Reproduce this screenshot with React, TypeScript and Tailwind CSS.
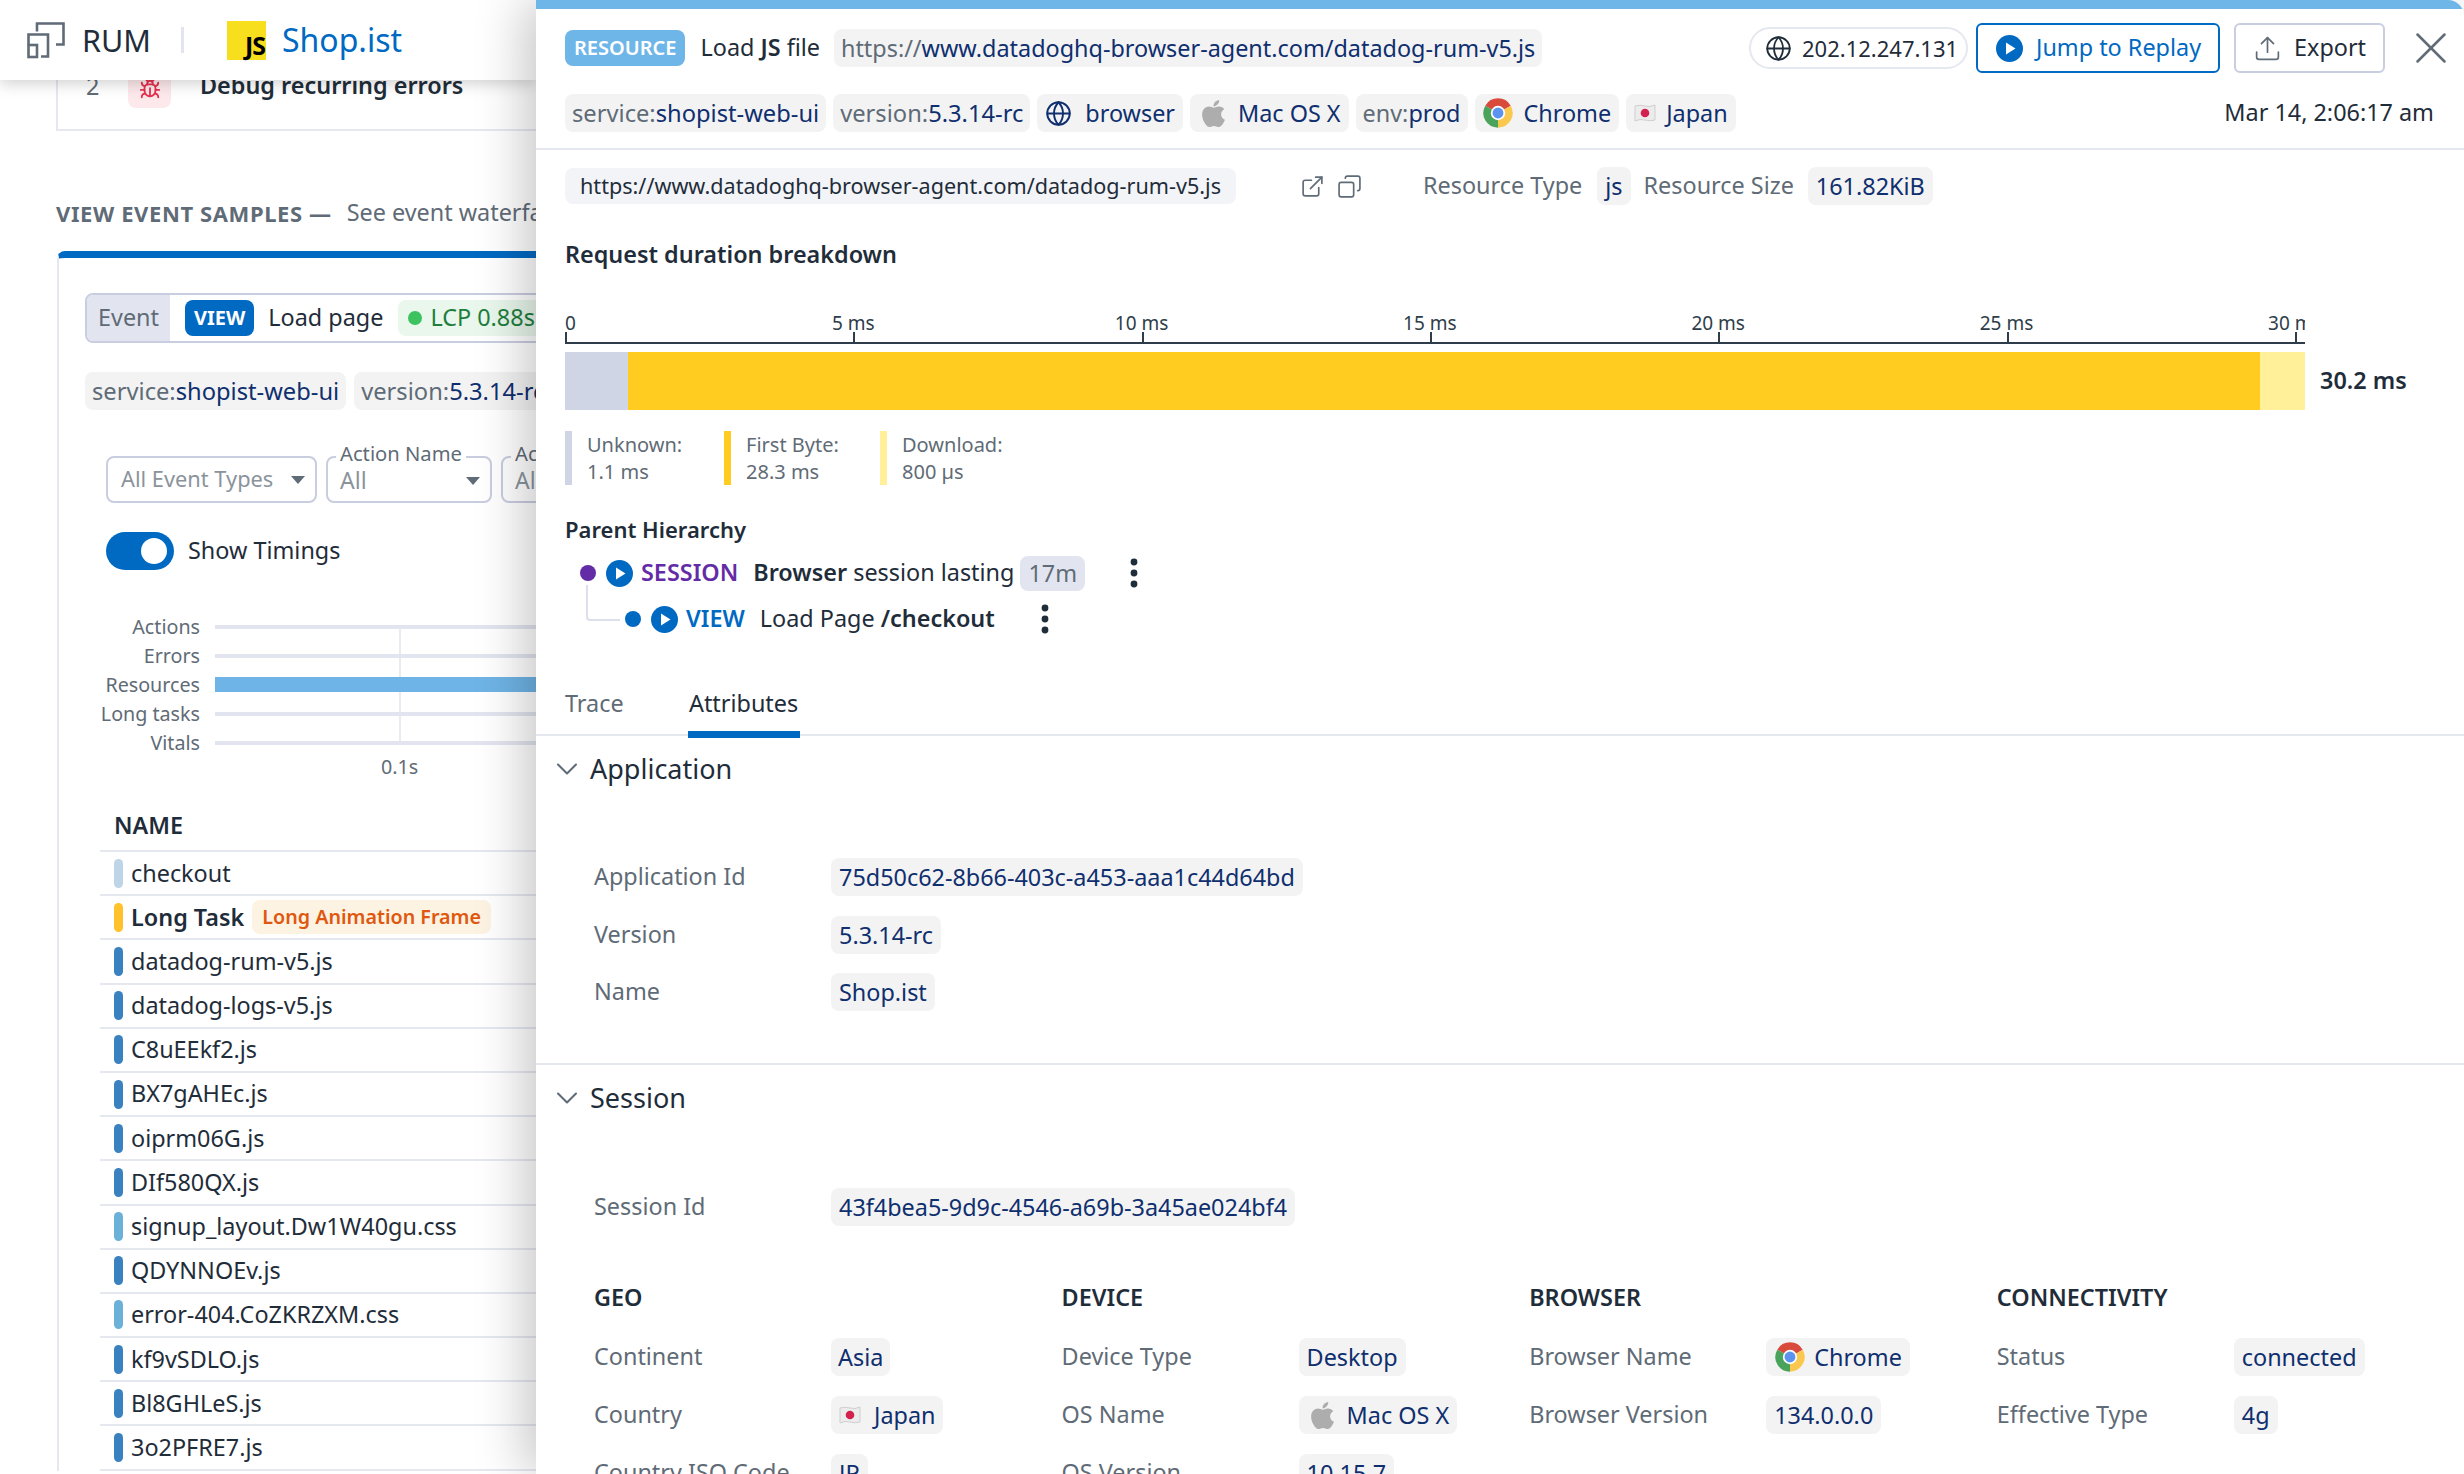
import React from "react";
import { Bug, ChevronDown, Copy, ExternalLink, Globe, Upload, X } from "lucide-react";
import { FaApple } from "react-icons/fa";

const Tag = ({ children, className = "" }: { children: React.ReactNode; className?: string }) => (
  <span className={`inline-flex h-[38px] shrink-0 items-center whitespace-nowrap rounded-lg bg-[#f3f3f4] px-[8px] text-[23.4px] leading-[38px] text-[#0f2f6e] ${className}`}>
    {children}
  </span>
);
const Key = ({ children }: { children: React.ReactNode }) => <span className="text-[#5f6b76]">{children}</span>;

const Chrome = ({ size = 32 }: { size?: number }) => (
  <svg width={size} height={size} viewBox="0 0 24 24" className="shrink-0">
    <path d="M12 12L2.47 6.5A11 11 0 0 1 21.53 6.5Z" fill="#d9493c" />
    <path d="M12 12L21.53 6.5A11 11 0 0 1 12 23Z" fill="#fbc84f" />
    <path d="M12 12L12 23A11 11 0 0 1 2.47 6.5Z" fill="#4aa35a" />
    <circle cx="12" cy="12" r="5.4" fill="#fff" />
    <circle cx="12" cy="12" r="4.1" fill="#5b93ee" />
  </svg>
);
const Flag = () => (
  <svg width="22" height="22" viewBox="0 0 22 22" className="shrink-0">
    <path d="M1 4Q6 2.5 11 4T21 3V18Q16 19.5 11 18T1 19Z" fill="#ececec" stroke="#cfcfcf" />
    <circle cx="11" cy="11" r="4.3" fill="#d3214f" />
  </svg>
);
const Apple = () => <FaApple className="shrink-0 text-[31px] text-[#adadad]" />;
const Play = ({ className = "" }: { className?: string }) => (
  <svg width="27" height="27" viewBox="0 0 27 27" className={`shrink-0 ${className}`}>
    <circle cx="13.5" cy="13.5" r="13.5" fill="#0069c2" />
    <path d="M10 7.5L19.5 13.5L10 19.5Z" fill="#fff" />
  </svg>
);
const Kebab = ({ className = "" }: { className?: string }) => (
  <svg width="8" height="30" viewBox="0 0 8 30" className={`shrink-0 ${className}`}>
    <circle cx="4" cy="4" r="3.4" fill="#1f2d3a" />
    <circle cx="4" cy="15" r="3.4" fill="#1f2d3a" />
    <circle cx="4" cy="26" r="3.4" fill="#1f2d3a" />
  </svg>
);
const Caret = () => (
  <svg width="14" height="8" viewBox="0 0 16 9" className="shrink-0">
    <path d="M0 0H16L8 9Z" fill="#5f6b76" />
  </svg>
);
const RumIcon = () => (
  <svg width="38" height="37" viewBox="0 0 38 37" fill="none" stroke="#5f6b76" strokeWidth="2.6" className="shrink-0">
    <path d="M10 9.5V1.5H36.5V22.5H29" />
    <path d="M1.5 22.5V12.5H21V34.5H14" />
    <rect x="1.5" y="23" width="8.5" height="12" />
  </svg>
);

const resources: [string, string][] = [
  ["datadog-rum-v5.js", "bg-[#3a82bf]"],
  ["datadog-logs-v5.js", "bg-[#3a82bf]"],
  ["C8uEEkf2.js", "bg-[#3a82bf]"],
  ["BX7gAHEc.js", "bg-[#3a82bf]"],
  ["oiprm06G.js", "bg-[#3a82bf]"],
  ["DIf580QX.js", "bg-[#3a82bf]"],
  ["signup_layout.Dw1W40gu.css", "bg-[#6bb0d9]"],
  ["QDYNNOEv.js", "bg-[#3a82bf]"],
  ["error-404.CoZKRZXM.css", "bg-[#6bb0d9]"],
  ["kf9vSDLO.js", "bg-[#3a82bf]"],
  ["Bl8GHLeS.js", "bg-[#3a82bf]"],
  ["3o2PFRE7.js", "bg-[#3a82bf]"],
];

const TableRow = ({ bar, children }: { bar: string; children: React.ReactNode }) => (
  <div className="flex h-[44.2px] items-center gap-[8px] whitespace-nowrap border-b-2 border-[#e6e8f0] pl-[14px] text-[23.4px] text-[#1f2d3a]">
    <span className={`h-[29px] w-[9px] shrink-0 rounded-full ${bar}`} />
    {children}
  </div>
);

const Left = () => (
  <div className="relative w-[536px] shrink-0 overflow-hidden">
    <div className="relative z-10 flex h-[80px] items-center bg-white pl-[27px] shadow-[0_4px_14px_rgba(0,0,0,0.18)]">
      <RumIcon />
      <span className="ml-[17px] text-[30.5px] leading-[40px] text-[#1f2d3a]">RUM</span>
      <span className="ml-[30px] h-[26px] w-[3px] bg-[#e2e5ef]" />
      <span className="ml-[43px] flex h-[39px] w-[39px] items-end justify-end bg-[#f7df1e] pb-[1px] pr-[1px] text-[25px] font-bold leading-[28px] tracking-[-1px] text-black">JS</span>
      <span className="ml-[16px] text-[32px] leading-[44px] text-[#0069c2]">Shop.ist</span>
    </div>
    <div className="-mt-[20px] ml-[56px] h-[71px] w-[600px] border-b-2 border-l-2 border-[#e6e8f0] pt-[6px]">
      <div className="flex h-[42px] items-center whitespace-nowrap">
        <span className="ml-[28px] w-[42px] text-[23.4px] text-[#5f6b76]">2</span>
        <span className="flex h-[42px] w-[43px] items-end justify-center rounded-lg bg-[#fde9ec] pb-[8px]"><Bug size={22} className="text-[#e6304f]" /></span>
        <span className="ml-[29px] -translate-y-[1px] text-[23.4px] font-semibold text-[#1f2d3a]">Debug recurring errors</span>
      </div>
    </div>
    <div className="ml-[56px] mt-[66px] flex h-[32px] items-center whitespace-nowrap text-[#5f6b76]">
      <span className="text-[22px] font-bold tracking-[0.6px]">VIEW EVENT SAMPLES —</span>
      <span className="ml-[15px] text-[23.4px]">See event waterfall</span>
    </div>
    <div className="ml-[57px] mt-[22px] w-[800px] rounded-tl-lg border-l-2 border-t-[7px] border-[#e6e8f0] border-t-[#0069c2] pb-0 pl-[26px] pt-[35px]">
      <div className="flex h-[50px] items-center whitespace-nowrap rounded-lg border-2 border-[#c8cde0]">
        <span className="flex h-full w-[83px] items-center justify-center rounded-l-md bg-[#e2e5ef] text-[23.4px] text-[#5f6b76]">Event</span>
        <span className="ml-[15px] rounded-lg bg-[#0069c2] px-[9px] text-[20px] font-bold leading-[36px] text-white">VIEW</span>
        <span className="ml-[14px] text-[23.4px] text-[#1f2d3a]">Load page</span>
        <span className="ml-[15px] flex h-[36px] items-center gap-[8px] rounded-lg bg-[#e9f7ec] pl-[10px] pr-[10px] text-[23.4px] text-[#1e7e3e]">
          <span className="h-[14px] w-[14px] rounded-full bg-[#3cc35f]" />LCP 0.88s
        </span>
      </div>
      <div className="mt-[29px] flex gap-[8px]">
        <Tag className="!px-[7px] !text-[23.7px]"><Key>service:</Key>shopist-web-ui</Tag>
        <Tag className="!px-[7px] !text-[23.7px]"><Key>version:</Key>5.3.14-rc</Tag>
      </div>
      <div className="ml-[21px] mt-[46px] flex gap-[9px]">
        <div className="flex h-[47px] w-[211px] items-center justify-between whitespace-nowrap rounded-lg border-2 border-[#c8cde0] pl-[13px] pr-[10px] text-[21.8px] text-[#8a939c]">All Event Types<Caret /></div>
        <div className="relative flex h-[47px] w-[166px] items-center justify-between rounded-lg border-2 border-[#c8cde0] pl-[12px] pr-[10px] pt-[2px] text-[23px] text-[#8a939c]">
          All<Caret />
          <span className="absolute -top-[18px] left-[8px] whitespace-nowrap bg-white px-[4px] text-[20.2px] leading-[26px] text-[#5f6b76]">Action Name</span>
        </div>
        <div className="relative flex h-[47px] w-[166px] items-center rounded-lg border-2 border-[#c8cde0] pl-[12px] pt-[2px] text-[23px] text-[#8a939c]">
          All
          <span className="absolute -top-[18px] left-[8px] whitespace-nowrap bg-white px-[4px] text-[20.2px] leading-[26px] text-[#5f6b76]">Action</span>
        </div>
      </div>
      <div className="ml-[21px] mt-[29px] flex h-[38px] items-center gap-[14px]">
        <span className="flex h-[38px] w-[68px] items-center justify-end rounded-full bg-[#0069c2] pr-[7px]"><span className="h-[26px] w-[26px] rounded-full bg-white" /></span>
        <span className="text-[23.4px] text-[#1f2d3a]">Show Timings</span>
      </div>
      <div className="relative mt-[42px] w-[700px]">
        <span className="absolute left-[314px] top-[15px] h-[114px] w-[2px] bg-[#e9ebf2]" />
        {[["Actions", 0], ["Errors", 0], ["Resources", 1], ["Long tasks", 0], ["Vitals", 0]].map(([n, active]) => (
          <div key={n as string} className="flex h-[29px] items-center gap-[15px]">
            <span className="w-[115px] shrink-0 text-right text-[19.7px] text-[#5f6b76]">{n}</span>
            <span className={active ? "relative h-[15px] flex-1 bg-[#6fb4e6]" : "relative h-[4px] flex-1 bg-[#e2e5ef]"} />
          </div>
        ))}
        <div className="-mt-[3px] ml-[130px] h-[26px] w-[370px] text-[19.7px] leading-[26px] text-[#5f6b76]"><span className="ml-[166px]">0.1s</span></div>
      </div>
      <div className="ml-[15px] mt-[21px] w-[700px]">
        <div className="flex h-[51px] items-center border-b-2 border-[#e6e8f0] pl-[14px] text-[23.4px] font-semibold text-[#1f2d3a]">NAME</div>
        <TableRow bar="bg-[#bdd5e6]">checkout</TableRow>
        <TableRow bar="bg-[#ffc22a]">
          <span className="font-semibold">Long Task</span>
          <span className="rounded-lg bg-[#fdf3e3] px-[10px] text-[19.7px] font-semibold leading-[34px] text-[#e0580f]">Long Animation Frame</span>
        </TableRow>
        {resources.map(([n, b]) => <TableRow key={n} bar={b}>{n}</TableRow>)}
      </div>
    </div>
  </div>
);

const ticks = [0, 5, 10, 15, 20, 25, 30];
const Axis = () => (
  <div className="relative mt-[40px] h-[34px] w-[1740px] overflow-hidden border-b-2 border-[#2e3d49]">
    {ticks.map((t) => (
      <div key={t} className="absolute top-0" style={{ left: t * 57.66 }}>
        <span className="absolute bottom-[-1px] h-[12px] w-[2px] bg-[#2e3d49]" style={{ top: 22 }} />
        <span className={`absolute top-0 whitespace-nowrap text-[19px] leading-[26px] text-[#2e3d49] ${t === 0 ? "left-0" : "-translate-x-1/2"}`}>{t === 0 ? "0" : `${t} ms`}</span>
      </div>
    ))}
  </div>
);
const Legend = ({ bar, name, value, width }: { bar: string; name: string; value: string; width: string }) => (
  <div className={`flex h-[54px] gap-[15px] text-[20px] leading-[27px] text-[#5f6b76] ${width}`}>
    <span className={`h-[54px] w-[7px] ${bar}`} />
    <div><div>{name}</div><div>{value}</div></div>
  </div>
);
const Section = ({ title }: { title: string }) => (
  <div className="mt-[13px] flex h-[40px] items-center gap-[5px] pl-[13px] text-[27px] text-[#1f2d3a]">
    <ChevronDown size={36} strokeWidth={1.4} className="text-[#5f6b76]" />{title}
  </div>
);
const Kv = ({ label, children, className = "" }: { label: string; children: React.ReactNode; className?: string }) => (
  <div className={`flex h-[38px] items-center ${className}`}>
    <span className="w-[237px] shrink-0 overflow-visible whitespace-nowrap text-[23.4px] text-[#5f6b76]">{label}</span>
    {children}
  </div>
);
const Col = ({ title, rows }: { title: string; rows: [string, React.ReactNode][] }) => (
  <div className="w-[467.6px] shrink-0">
    <div className="h-[32px] text-[23.4px] font-semibold leading-[32px] text-[#1f2d3a]">{title}</div>
    <div className="mt-[25px] flex flex-col gap-[20px]">
      {rows.map(([l, v]) => <Kv key={l} label={l}>{v}</Kv>)}
    </div>
  </div>
);

const Panel = () => (
  <div className="relative z-20 flex h-full flex-1 flex-col overflow-hidden rounded-tr-2xl bg-white shadow-[-12px_0_50px_rgba(0,0,0,0.22)]">
    <div className="h-[9px] shrink-0 bg-[#6fb6e8]" />
    <div className="mt-[14px] flex h-[50px] items-center pl-[29px] pr-[6px]">
      <span className="rounded-lg bg-[#6fb6e8] px-[9px] text-[20px] font-semibold leading-[36px] text-white">RESOURCE</span>
      <span className="ml-[15px] whitespace-pre text-[23.4px] text-[#1f2d3a]">Load <b className="font-semibold">JS</b> file</span>
      <Tag className="ml-[14px] !px-[7px]"><Key>https://</Key>www.datadoghq-browser-agent.com/datadog-rum-v5.js</Tag>
      <span className="ml-auto flex h-[42px] w-[219px] items-center gap-[10px] whitespace-nowrap rounded-full border-2 border-[#e6e8f0] pl-[14px] text-[22px] text-[#1f2d3a]"><Globe size={27} strokeWidth={1.6} />202.12.247.131</span>
      <span className="ml-[8px] flex h-[50px] w-[244px] items-center gap-[13px] whitespace-nowrap rounded-md border-2 border-[#0069c2] pl-[18px] text-[23.4px] text-[#0069c2]"><Play />Jump to Replay</span>
      <span className="ml-[14px] flex h-[50px] w-[151px] items-center gap-[12px] rounded-md border-2 border-[#c8cde0] pl-[17px] text-[23.4px] text-[#1f2d3a]"><Upload size={29} strokeWidth={1.4} className="text-[#5f6b76]" />Export</span>
      <X size={54} strokeWidth={1.1} className="ml-[19px] text-[#5f6b76]" />
    </div>
    <div className="mt-[21px] flex items-center gap-[7px] pl-[29px] pr-[30px]">
      <Tag className="!px-[7px] !text-[23.7px]"><Key>service:</Key>shopist-web-ui</Tag>
      <Tag className="!px-[7px] !text-[23.7px]"><Key>version:</Key>5.3.14-rc</Tag>
      <Tag className="gap-[13px]"><Globe size={27} strokeWidth={1.7} />browser</Tag>
      <Tag className="gap-[9px]"><Apple />Mac OS X</Tag>
      <Tag className="!px-[7px]"><Key>env:</Key>prod</Tag>
      <Tag className="gap-[10px] !pl-[7px]"><Chrome />Chrome</Tag>
      <Tag className="gap-[10px]"><Flag />Japan</Tag>
      <span className="ml-auto text-[23.4px] text-[#1f2d3a]">Mar 14, 2:06:17 am</span>
    </div>
    <div className="mt-[16px] h-[2px] shrink-0 bg-[#e6e8f0]" />
    <div className="mt-[17px] flex items-center pl-[29px]">
      <span className="flex h-[36px] items-center whitespace-nowrap rounded-lg bg-[#f3f4f8] px-[15px] text-[21.6px] text-[#1f2d3a]">https://www.datadoghq-browser-agent.com/datadog-rum-v5.js</span>
      <ExternalLink size={25} strokeWidth={1.6} className="ml-[64px] text-[#5f6b76]" />
      <Copy size={25} strokeWidth={1.6} className="ml-[12px] -scale-x-100 text-[#5f6b76]" />
      <span className="ml-[61px] text-[23.4px] text-[#5f6b76]">Resource Type</span>
      <Tag className="ml-[15px]">js</Tag>
      <span className="ml-[13px] text-[23.4px] text-[#5f6b76]">Resource Size</span>
      <Tag className="ml-[14px]">161.82KiB</Tag>
    </div>
    <div className="mt-[33px] pl-[29px]">
      <div className="h-[32px] text-[23.4px] font-semibold leading-[32px] text-[#1f2d3a]">Request duration breakdown</div>
      <Axis />
      <div className="mt-[8px] flex h-[58px] items-center">
        <div className="flex h-full w-[1740px]">
          <span className="h-full w-[63px] bg-[#d0d5e5]" />
          <span className="h-full flex-1 bg-[#ffcc1f]" />
          <span className="h-full w-[45px] bg-[#fff099]" />
        </div>
        <span className="ml-[15px] text-[23.4px] font-semibold text-[#1f2d3a]">30.2 ms</span>
      </div>
      <div className="mt-[21px] flex">
        <Legend bar="bg-[#d0d5e5]" name="Unknown:" value="1.1 ms" width="w-[159px]" />
        <Legend bar="bg-[#ffcc1f]" name="First Byte:" value="28.3 ms" width="w-[156px]" />
        <Legend bar="bg-[#fff099]" name="Download:" value="800 µs" width="w-[160px]" />
      </div>
      <div className="mt-[29px] h-[30px] text-[22px] font-semibold leading-[30px] text-[#1f2d3a]">Parent Hierarchy</div>
      <div className="relative">
        <span className="absolute left-[21px] top-[30px] h-[36px] w-[34px] rounded-bl-sm border-b-2 border-l-2 border-[#dde0ea]" />
        <div className="mt-[11px] flex h-[36px] items-center whitespace-nowrap pl-[15px] text-[23.4px] text-[#1f2d3a]">
          <span className="relative h-[16px] w-[16px] rounded-full bg-[#632ca6]" />
          <Play className="ml-[10px]" />
          <span className="ml-[8px] font-semibold text-[#632ca6]">SESSION</span>
          <span className="ml-[15px]"><b className="font-semibold">Browser</b> session lasting</span>
          <span className="ml-[6px] h-[35px] rounded-lg bg-[#e2e5ef] px-[8px] leading-[35px] text-[#5f6b76]">17m</span>
          <Kebab className="ml-[45px]" />
        </div>
        <div className="mt-[10px] flex h-[36px] items-center whitespace-nowrap pl-[60px] text-[23.4px] text-[#1f2d3a]">
          <span className="relative h-[16px] w-[16px] rounded-full bg-[#0069c2]" />
          <Play className="ml-[10px]" />
          <span className="ml-[8px] font-semibold text-[#0069c2]">VIEW</span>
          <span className="ml-[15px]">Load Page <b className="font-semibold">/checkout</b></span>
          <Kebab className="ml-[46px]" />
        </div>
      </div>
    </div>
    <div className="mt-[43px] flex h-[56px] shrink-0 border-b-2 border-[#e6e8f0] pl-[29px] text-[23.4px]">
      <span className="pt-[6px] leading-[34px] text-[#5f6b76]">Trace</span>
      <span className="relative ml-[64px] h-[56px] w-[112px] pt-[6px] text-center leading-[34px] text-[#1f2d3a]">Attributes<span className="absolute bottom-[-2px] left-0 h-[7px] w-full bg-[#0069c2]" /></span>
    </div>
    <Section title="Application" />
    <div className="mt-[69px] flex flex-col gap-[19.5px] pl-[58px]">
      <Kv label="Application Id"><Tag>75d50c62-8b66-403c-a453-aaa1c44d64bd</Tag></Kv>
      <Kv label="Version"><Tag>5.3.14-rc</Tag></Kv>
      <Kv label="Name"><Tag>Shop.ist</Tag></Kv>
    </div>
    <div className="mt-[52px] h-[2px] shrink-0 bg-[#e6e8f0]" />
    <Section title="Session" />
    <div className="mt-[70px] pl-[58px]">
      <Kv label="Session Id"><Tag>43f4bea5-9d9c-4546-a69b-3a45ae024bf4</Tag></Kv>
    </div>
    <div className="mt-[55px] flex pl-[58px]">
      <Col title="GEO" rows={[
        ["Continent", <Tag className="!px-[7px]">Asia</Tag>],
        ["Country", <Tag className="gap-[13px]"><Flag />Japan</Tag>],
        ["Country ISO Code", <Tag>JP</Tag>],
      ]} />
      <Col title="DEVICE" rows={[
        ["Device Type", <Tag>Desktop</Tag>],
        ["OS Name", <Tag className="gap-[9px]"><Apple />Mac OS X</Tag>],
        ["OS Version", <Tag>10.15.7</Tag>],
      ]} />
      <Col title="BROWSER" rows={[
        ["Browser Name", <Tag className="gap-[8px]"><Chrome />Chrome</Tag>],
        ["Browser Version", <Tag>134.0.0.0</Tag>],
      ]} />
      <Col title="CONNECTIVITY" rows={[
        ["Status", <Tag>connected</Tag>],
        ["Effective Type", <Tag>4g</Tag>],
      ]} />
    </div>
  </div>
);

export default function App() {
  return (
    <div className="flex h-screen w-screen overflow-hidden bg-white [font-family:'Noto_Sans',sans-serif]">
      <Left />
      <Panel />
    </div>
  );
}
